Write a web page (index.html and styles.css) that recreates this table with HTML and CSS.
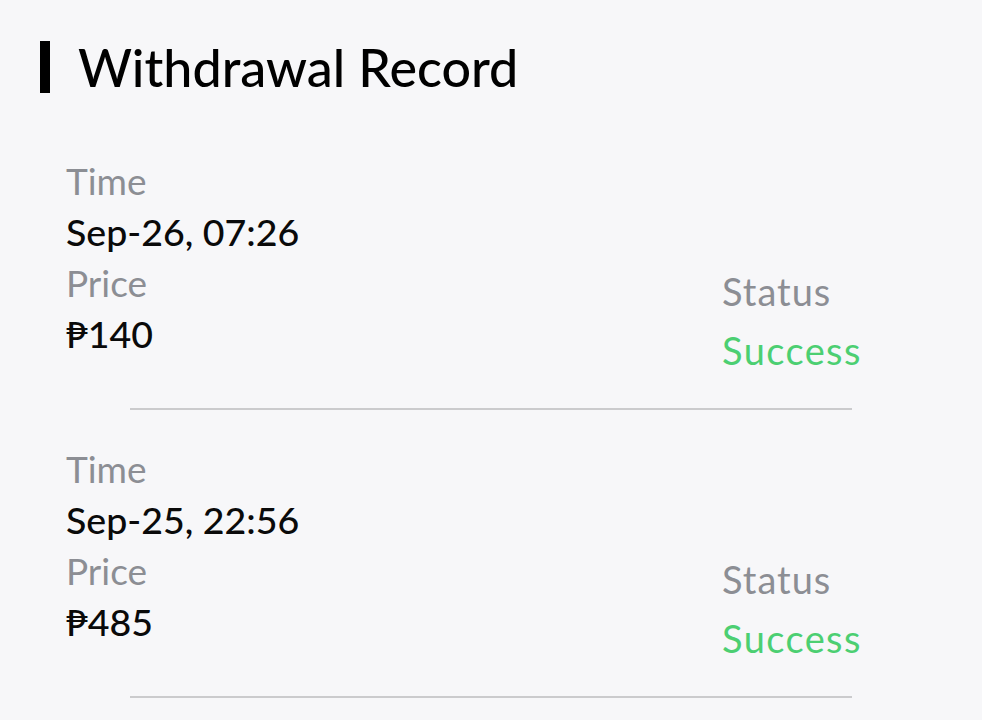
FILE: index.html
```html
<!DOCTYPE html>
<html lang="en">
  <head>
    <meta charset="UTF-8" />
    <meta name="viewport" content="width=device-width, initial-scale=1.0" />
    <title>Withdrawal Record</title>
    <link rel="stylesheet" href="styles.css">
  </head>
  <body>
    <div class="page">
      <div class="title-row">
        <span class="title-bar"></span>
        <h1>Withdrawal Record</h1>
      </div>

      <div class="record">
        <div class="record-body">
          <div class="record-main">
            <div class="label">Time</div>
            <div class="value">Sep-26, 07:26</div>
            <div class="label">Price</div>
            <div class="value">₱140</div>
          </div>
          <div class="record-side">
            <div class="label side-label">Status</div>
            <div class="status">Success</div>
          </div>
        </div>
        <div class="divider"></div>
      </div>

      <div class="record">
        <div class="record-body">
          <div class="record-main">
            <div class="label">Time</div>
            <div class="value">Sep-25, 22:56</div>
            <div class="label">Price</div>
            <div class="value">₱485</div>
          </div>
          <div class="record-side">
            <div class="label side-label">Status</div>
            <div class="status">Success</div>
          </div>
        </div>
        <div class="divider"></div>
      </div>
    </div>
  </body>
</html>
```

FILE: styles.css
```css
body {
  margin: 0;
  background-color: #f7f7f9;
  font-family: Lato, "Noto Sans", sans-serif;
  color: #111;
}
.page {
  padding-top: 41px;
}
.title-row {
  display: flex;
  align-items: center;
  gap: 28px;
  padding-left: 40px;
  margin-bottom: 29px;
}
.title-bar {
  width: 10px;
  height: 52px;
  background-color: #000;
}
.title-row h1 {
  margin: 0;
  font-size: 52px;
  font-weight: 500;
  line-height: 52px;
  color: #000;
}
.record {
  padding-top: 33px;
}
.record-body {
  display: flex;
  padding-left: 66px;
}
.record-main {
  flex: 1;
}
.record-side {
  width: 260px;
  padding-top: 111px;
}
.label {
  font-size: 37px;
  line-height: 51px;
  color: #8c8e94;
}
.value {
  font-size: 37.5px;
  line-height: 51px;
  font-weight: 500;
  color: #0a0a0a;
}
.side-label {
  font-size: 38px;
  letter-spacing: 1px;
}
.status {
  margin-top: 4px;
  font-size: 38px;
  line-height: 59px;
  letter-spacing: 1.4px;
  color: #4ccf72;
}
.divider {
  height: 2px;
  background-color: #cbcbcd;
  margin: 28px 130px 0;
}
```
